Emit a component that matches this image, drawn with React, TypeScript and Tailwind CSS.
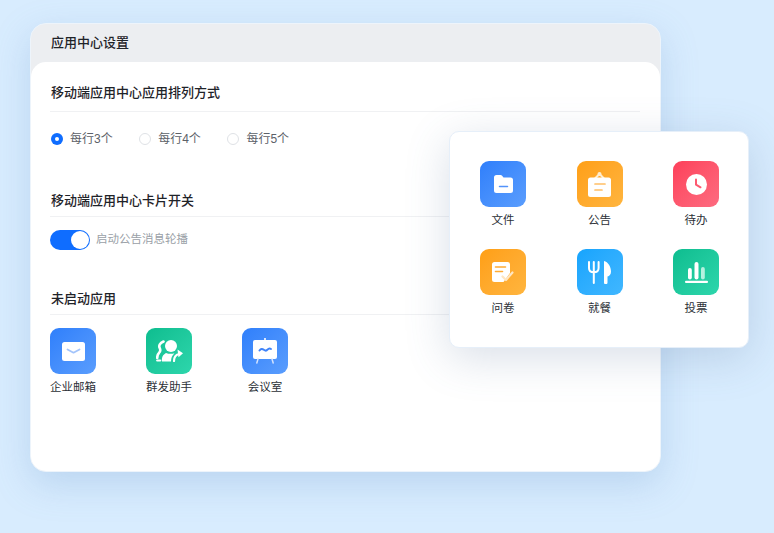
const FONT = "font-['Liberation_Sans','Noto_Sans_CJK_SC',sans-serif]";

const BLUE = "bg-gradient-to-br from-[#2f7ffb] to-[#5a9dfd]";
const GREEN = "bg-gradient-to-br from-[#0cbd8f] to-[#2dd6ac]";
const ORANGE = "bg-gradient-to-br from-[#ff9f14] to-[#ffb53e]";
const RED = "bg-gradient-to-br from-[#fd3f5a] to-[#fd6b80]";
const SKY = "bg-gradient-to-br from-[#15a4fd] to-[#40b7ff]";

function Mail() {
  return (
    <svg width="23" height="19" viewBox="0 0 23 19">
      <rect width="23" height="19" rx="2.5" fill="#fff" />
      <path d="M5.500 7.500l6 3.200 6-3.200" fill="none" stroke="#a3c4fb" strokeWidth="1.800" strokeLinecap="round" strokeLinejoin="round" />
    </svg>
  );
}

function Mass() {
  return (
    <svg width="27" height="22" viewBox="0 0 27 22">
      <circle cx="15" cy="6" r="6" fill="#fff" />
      <path d="M6 21.500c-.6-4 1-7 4-8.500 2.500 1 5.500 1.200 8.500.3-2.300 2-3.500 4.800-3.500 8.200z" fill="#fff" />
      <path d="M7.500 1.500C4 3 2.500 5.500 3.700 8c.9 1.900.9 3.300-.5 4.700-1.300 1.300-2 3-2 5.300" fill="none" stroke="#fff" strokeWidth="2.600" strokeLinecap="round" />
      <path d="M1.200 20.500h3" stroke="#fff" strokeWidth="2.200" strokeLinecap="round" />
      <path d="M18 21c0-3.600 1.800-6.200 5-7" fill="none" stroke="#fff" strokeWidth="2.200" strokeLinecap="round" />
      <path d="M21.500 9.500l5.500 3.800-4.500 4z" fill="#fff" />
    </svg>
  );
}

function Board() {
  return (
    <svg width="24" height="26" viewBox="0 0 24 26">
      <rect x="11" y="0" width="2" height="3" fill="#dbe7fd" />
      <rect y="2" width="24" height="19" rx="2" fill="#fff" />
      <path d="M6.500 12.500c1.500-2 2.800-2 4.300-.8s2.700 1.200 3.700 0 2-1.700 3.500-.7" fill="none" stroke="#3f83f9" strokeWidth="2" strokeLinecap="round" />
      <path d="M5 21l-1.200 4M19 21l1.200 4" stroke="#d3e2fd" strokeWidth="1.500" strokeLinecap="round" />
    </svg>
  );
}

function Folder() {
  return (
    <svg width="19" height="18" viewBox="0 0 19 18">
      <path d="M2.500 0h4c.7 0 1.200.3 1.600.8L9.500 2.500h7A2.500 2.500 0 0 1 19 5v10.500a2.500 2.500 0 0 1-2.500 2.500h-14A2.500 2.500 0 0 1 0 15.500v-13A2.500 2.500 0 0 1 2.500 0z" fill="#fff" />
      <path d="M5.500 11.500h8" stroke="#5393fb" strokeWidth="1.500" strokeLinecap="round" />
    </svg>
  );
}

function Notice() {
  return (
    <svg width="23" height="25" viewBox="0 0 23 25">
      <path d="M7 6.500L11.500 2 16 6.500" fill="none" stroke="#ffedd0" strokeWidth="2" />
      <circle cx="11.500" cy="2" r="2" fill="#ffedd0" />
      <rect y="5.500" width="23" height="19.500" rx="2.500" fill="#fff" />
      <path d="M7 12h10M7 18h7" stroke="#ffbf66" strokeWidth="1.700" strokeLinecap="round" />
    </svg>
  );
}

function Clock() {
  return (
    <svg width="21" height="21" viewBox="0 0 21 21">
      <circle cx="10.500" cy="10.500" r="10.500" fill="#fff" />
      <path d="M10 5.500v5.200l4.500 2.600" fill="none" stroke="#fd5a70" strokeWidth="2" strokeLinecap="round" strokeLinejoin="round" />
    </svg>
  );
}

function Survey() {
  return (
    <svg width="22" height="20" viewBox="0 0 22 20">
      <path d="M2.500 0h13A2.500 2.500 0 0 1 18 2.500V11l-6.500 9h-9A2.500 2.500 0 0 1 0 17.500v-15A2.500 2.500 0 0 1 2.500 0z" fill="#fff" />
      <path d="M3.500 5h10M3.500 9.500h7" stroke="#ffab33" strokeWidth="1.600" strokeLinecap="round" />
      <path d="M10.500 14.500l3.500 3.500 6.500-7.500" fill="none" stroke="#ffe6c2" strokeWidth="2.200" strokeLinecap="round" strokeLinejoin="round" />
    </svg>
  );
}

function Dining() {
  return (
    <svg width="23" height="23" viewBox="0 0 23 23">
      <path d="M1 1v6c0 2.600 2 4.300 4.800 4.300s4.800-1.700 4.800-4.300V1M5.800 1v21" fill="none" stroke="#fff" strokeWidth="2" strokeLinecap="round" />
      <path d="M16 0c4 1 7 5.500 7 10.500 0 2.800-1.300 4.500-3.500 5V21.500a1.700 1.700 0 0 1-3.500 0z" fill="#fff" />
    </svg>
  );
}

function Vote() {
  return (
    <svg width="23" height="21" viewBox="0 0 23 21">
      <rect x="3" y="6" width="3.800" height="11.500" rx="1.900" fill="#fff" />
      <rect x="9.500" y="0" width="4" height="17.500" rx="2" fill="#fff" />
      <rect x="16" y="5" width="3.800" height="12.500" rx="1.900" fill="#b5f1df" />
      <rect y="18.800" width="23" height="2.200" rx="1" fill="#fff" />
    </svg>
  );
}

function AppTile({ bg, label, children }: { bg: string; label: string; children: React.ReactNode }) {
  return (
    <div className="flex w-[46px] flex-col items-center">
      <div className={`flex h-[46px] w-[46px] items-center justify-center rounded-[9px] ${bg}`}>{children}</div>
      <span className="mt-[6px] whitespace-nowrap text-[11.5px] leading-[14px] text-[#2b2f36]">{label}</span>
    </div>
  );
}

function SectionTitle({ title, className }: { title: string; className: string }) {
  return (
    <h2 className={`border-b border-[#f0f1f3] pl-px text-[13px] font-medium leading-[18px] text-[#1f2329] ${className}`}>
      {title}
    </h2>
  );
}

function Radio({ label, checked }: { label: string; checked?: boolean }) {
  return (
    <label className="flex items-center gap-[7px] text-[12px] leading-[16px] text-[#5c6168]">
      {checked ? (
        <span className="flex h-3 w-3 items-center justify-center rounded-full bg-[#0f6dff]">
          <span className="h-1 w-1 rounded-full bg-white" />
        </span>
      ) : (
        <span className="h-3 w-3 rounded-full border border-[#dfe2e6] bg-white" />
      )}
      {label}
    </label>
  );
}

export default function App() {
  return (
    <div className={`relative h-[533px] w-[774px] overflow-hidden bg-[#d8ecfe] pl-[30px] pt-[23px] ${FONT}`}>
      {/* Main card */}
      <div className="h-[449px] w-[631px] rounded-[16px] border border-[#edf4fb] bg-[#eceef1] shadow-[0_12px_36px_rgba(100,145,200,0.26)]">
        <div className="flex h-[38px] items-center pl-5 text-[13px] font-medium text-[#1f2329]">应用中心设置</div>
        <div className="h-[409px] rounded-[15px] bg-white pl-[19px] pr-5 pt-[22px]">
          <SectionTitle title="移动端应用中心应用排列方式" className="pb-[9px]" />
          <div className="ml-px mt-[19px] flex gap-[26.5px]">
            <Radio label="每行3个" checked />
            <Radio label="每行4个" />
            <Radio label="每行5个" />
          </div>

          <SectionTitle title="移动端应用中心卡片开关" className="mt-[45px] pb-[6px]" />
          <div className="mt-[13px] flex items-center gap-[6px]">
            <div className="flex h-5 w-10 items-center justify-end rounded-full bg-[#0f6dff] pr-px">
              <span className="h-[18px] w-[18px] rounded-full bg-white" />
            </div>
            <span className="text-[11.5px] text-[#9a9fa7]">启动公告消息轮播</span>
          </div>

          <SectionTitle title="未启动应用" className="mt-[40px] pb-[6px]" />
          <div className="mt-[13px] flex gap-[50px]">
            <AppTile bg={BLUE} label="企业邮箱"><Mail /></AppTile>
            <AppTile bg={GREEN} label="群发助手"><Mass /></AppTile>
            <AppTile bg={BLUE} label="会议室"><Board /></AppTile>
          </div>
        </div>
      </div>

      {/* Floating panel */}
      <div className="absolute left-[449px] top-[131px] flex h-[217px] w-[300px] flex-col gap-[22px] rounded-[10px] border border-[#e6eff9] bg-white pl-[30px] pr-[29px] pt-[29px] shadow-[0_10px_44px_rgba(80,110,150,0.22)]">
        <div className="flex justify-between">
          <AppTile bg={BLUE} label="文件"><Folder /></AppTile>
          <AppTile bg={ORANGE} label="公告"><Notice /></AppTile>
          <AppTile bg={RED} label="待办"><Clock /></AppTile>
        </div>
        <div className="flex justify-between">
          <AppTile bg={ORANGE} label="问卷"><Survey /></AppTile>
          <AppTile bg={SKY} label="就餐"><Dining /></AppTile>
          <AppTile bg={GREEN} label="投票"><Vote /></AppTile>
        </div>
      </div>
    </div>
  );
}
